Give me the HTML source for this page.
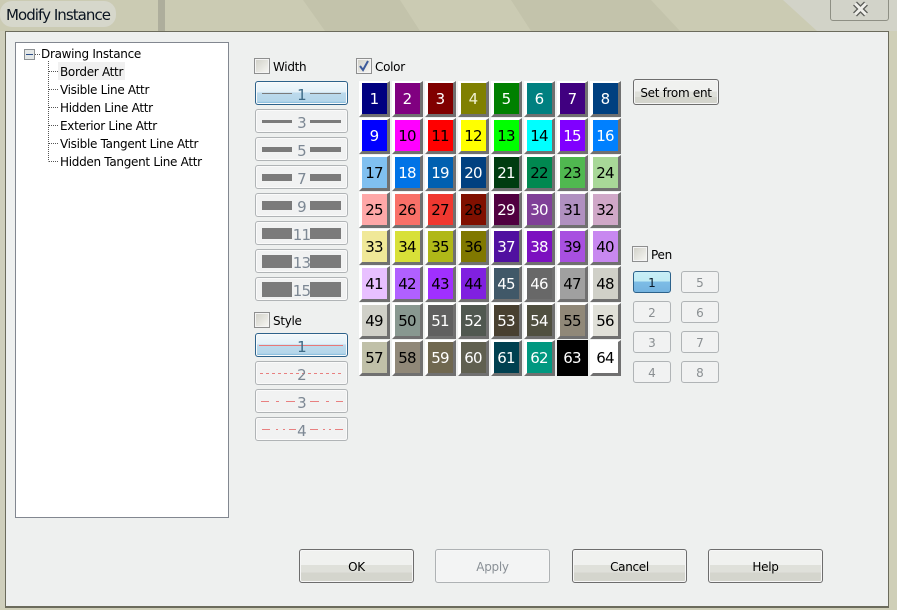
<!DOCTYPE html>
<html><head><meta charset="utf-8"><style>
html,body{margin:0;padding:0;width:897px;height:610px;overflow:hidden;background:#cbcbb3}
*{box-sizing:border-box}
body{position:relative;font-family:"DejaVu Sans","Liberation Sans",sans-serif;font-size:12px;letter-spacing:-.3px;color:#000}
.a{position:absolute;white-space:nowrap}
#dlg{position:absolute;left:5px;top:31px;width:884px;height:577px;background:#eef0ef;border:1px solid #6b6b5c;border-bottom:2px solid #6b6b5c}
#tree{position:absolute;left:15px;top:42px;width:214px;height:476px;background:#fff;border:1px solid #828790}
.t{position:absolute;left:60px;line-height:18px;height:18px;white-space:nowrap}
.cb{position:absolute;width:16px;height:16px;border:1px solid #8e8f8f;background:linear-gradient(135deg,#cfcfc6,#f8f8f5);box-shadow:inset 0 0 0 1px #f4f4f4}
.lb{position:absolute;line-height:16px;white-space:nowrap}
.w{position:absolute;left:255px;width:93px;height:24px;border:1px solid #b0b4b6;border-radius:3px;background:#f1f2f2;box-shadow:inset 0 0 0 1px #fafafa}
.w.on{border:1px solid #2c628b;background:linear-gradient(#f2f8fb 0,#e4f1f8 45%,#bcdaec 50%,#b5d6ea 88%,#5fa7d3 100%)}
.w i{position:absolute;background:#7b7b7b;display:block}
.w b,.p b{position:absolute;left:0;right:0;text-align:center;font:400 15px/24px "DejaVu Sans",sans-serif;letter-spacing:-.8px;color:#7d8894;top:1px}
.w.on b{color:#3d6a86}
.s{position:absolute;width:31px;height:36px;border-style:solid;border-width:2px 3px 3px 3px;border-color:#fff #707070 #707070 #fff}
.s span{position:absolute;left:0;top:0;width:25px;height:31px;padding-right:1px;text-align:center;font:400 15px/32px "DejaVu Sans",sans-serif;letter-spacing:-.8px}
.p{position:absolute;width:38px;height:22px;border:1px solid #b0b4b6;border-radius:3px;background:#f1f2f2}
.p b{font-size:12px;letter-spacing:0;line-height:20px;top:1px;color:#8a8f92}
.p.on{border:1px solid #2c628b;background:linear-gradient(#c9eff7 0,#c0ebf4 45%,#7dbde6 50%,#74b3df 100%)}
.p.on b{color:#0a1a2a}
.b{position:absolute;border:1px solid #6d6d6d;border-radius:3px;background:linear-gradient(#f0f1ef 0,#f0f1ef 47%,#dfe0da 47%,#dfe0da 70%,#d4d5cd 70%,#d4d5cd 100%);box-shadow:inset 0 0 0 1px #f6f6f6;text-align:center}
.b.d{border-color:#aeb2b4;background:#f3f4f4;color:#8a9096}
</style></head><body>
<svg class="a" style="left:0;top:0" width="897" height="34">
<polygon points="303,0 400,0 420,31 325,31" fill="#c3c3ab"/>
<polygon points="511,0 651,0 680,31 531,31" fill="#c3c3ab"/>
<polygon points="783,0 897,0 897,31 817,31" fill="#d2d3c8"/>
<rect x="158" y="0" width="7" height="31" fill="#aeae9c"/>
</svg>
<svg class="a" style="left:0;top:31px" width="897" height="579">
<rect x="889" y="0" width="8" height="579" fill="#cfcfb8"/>
<rect x="0" y="0" width="5" height="579" fill="#cfcfbc"/>
<rect x="0" y="577" width="897" height="2" fill="#cfcfb8"/>
</svg>
<div class="a" style="left:0;top:1px;width:116px;height:26px;background:#d6d7cb;border-radius:12px"></div>
<div class="a" style="left:6px;top:6px;font:400 15px/18px 'DejaVu Sans',sans-serif;letter-spacing:-.95px;color:#0a1420">Modify Instance</div>
<div class="a" style="left:830px;top:-4px;width:59px;height:25px;border:1px solid #8e8f84;border-radius:3px;background:#d2d3c9"></div>
<svg class="a" style="left:851px;top:1px" width="20" height="17" fill="none">
<path d="M4 2.5L15 13.5M15 2.5L4 13.5" stroke="#5c5d58" stroke-width="5.5"/>
<path d="M4 2.5L15 13.5M15 2.5L4 13.5" stroke="#efefea" stroke-width="3"/>
</svg>
<div id="dlg"></div>
<div id="tree"></div>
<svg class="a" style="left:15px;top:42px" width="60" height="130" fill="none">
<rect x="9.5" y="7.5" width="10" height="10" fill="#e4e7e6" stroke="#8d9194"/>
<path d="M11 12.5H18" stroke="#2c4f8a"/>
<path d="M20 12.5H25M33.5 19V119.5M34 29.5H44M34 47.5H44M34 65.5H44M34 83.5H44M34 101.5H44M34 119.5H44" stroke="#555" stroke-dasharray="1 1"/>
</svg>
<div class="t" style="left:41px;top:45px">Drawing Instance</div>
<div class="a" style="left:58px;top:62px;width:67px;height:18px;background:#f0f0f0"></div>
<div class="t" style="top:63px">Border Attr</div>
<div class="t" style="top:81px">Visible Line Attr</div>
<div class="t" style="top:99px">Hidden Line Attr</div>
<div class="t" style="top:117px">Exterior Line Attr</div>
<div class="t" style="top:135px">Visible Tangent Line Attr</div>
<div class="t" style="top:153px">Hidden Tangent Line Attr</div>

<div class="cb" style="left:254px;top:58px"></div><div class="lb" style="left:273px;top:59px">Width</div>
<div class="cb" style="left:356px;top:58px"></div>
<svg class="a" style="left:357px;top:59px" width="14" height="14"><path d="M3 7L6 11L11 2" fill="none" stroke="#3c5a9a" stroke-width="2"/></svg>
<div class="lb" style="left:375px;top:59px">Color</div>
<div class="cb" style="left:254px;top:312px"></div><div class="lb" style="left:273px;top:313px">Style</div>
<div class="cb" style="left:632px;top:246px"></div><div class="lb" style="left:651px;top:247px">Pen</div>

<div class="w on" style="top:81px"><i style="left:6px;top:11px;width:30px;height:1px"></i><i style="left:54px;top:11px;width:31px;height:1px"></i><b>1</b></div>
<div class="w" style="top:109px"><i style="left:6px;top:10px;width:30px;height:3px"></i><i style="left:54px;top:10px;width:31px;height:3px"></i><b>3</b></div>
<div class="w" style="top:137px"><i style="left:6px;top:9px;width:30px;height:5px"></i><i style="left:54px;top:9px;width:31px;height:5px"></i><b>5</b></div>
<div class="w" style="top:165px"><i style="left:6px;top:8px;width:30px;height:7px"></i><i style="left:54px;top:8px;width:31px;height:7px"></i><b>7</b></div>
<div class="w" style="top:193px"><i style="left:6px;top:7px;width:30px;height:9px"></i><i style="left:54px;top:7px;width:31px;height:9px"></i><b>9</b></div>
<div class="w" style="top:221px"><i style="left:6px;top:6px;width:30px;height:11px"></i><i style="left:54px;top:6px;width:31px;height:11px"></i><b>11</b></div>
<div class="w" style="top:249px"><i style="left:6px;top:5px;width:30px;height:13px"></i><i style="left:54px;top:5px;width:31px;height:13px"></i><b>13</b></div>
<div class="w" style="top:277px"><i style="left:6px;top:4px;width:30px;height:15px"></i><i style="left:54px;top:4px;width:31px;height:15px"></i><b>15</b></div>

<div class="w on" style="top:333px"><svg class="a" style="left:0;top:0" width="91" height="22"><path d="M3 11.5H87" stroke="#e87878"/></svg><b>1</b></div>
<div class="w" style="top:361px"><svg class="a" style="left:0;top:0" width="91" height="22"><path d="M4 11.5H87" stroke="#e88080" stroke-dasharray="3 3"/></svg><b>2</b></div>
<div class="w" style="top:389px"><svg class="a" style="left:0;top:0" width="91" height="22"><path d="M5 11.5H13M20 11.5H23M30 11.5H39M54 11.5H63M70 11.5H73M80 11.5H87" stroke="#e88080"/></svg><b>3</b></div>
<div class="w" style="top:417px"><svg class="a" style="left:0;top:0" width="91" height="22"><path d="M6 11.5H14M20 11.5H22M27 11.5H29M33 11.5H40M54 11.5H62M67 11.5H69M73 11.5H75M79 11.5H87" stroke="#e88080"/></svg><b>4</b></div>

<div class="s" style="left:359px;top:81px"><span style="background:#000080;color:#fff">1</span></div>
<div class="s" style="left:392px;top:81px"><span style="background:#800080;color:#fff">2</span></div>
<div class="s" style="left:425px;top:81px"><span style="background:#800000;color:#fff">3</span></div>
<div class="s" style="left:458px;top:81px"><span style="background:#808000;color:#f0f0d0">4</span></div>
<div class="s" style="left:491px;top:81px"><span style="background:#008000;color:#fff">5</span></div>
<div class="s" style="left:524px;top:81px"><span style="background:#008080;color:#fff">6</span></div>
<div class="s" style="left:557px;top:81px"><span style="background:#400080;color:#fff">7</span></div>
<div class="s" style="left:590px;top:81px"><span style="background:#004080;color:#fff">8</span></div>

<div class="s" style="left:359px;top:118px"><span style="background:#0000ff;color:#fff">9</span></div>
<div class="s" style="left:392px;top:118px"><span style="background:#ff00ff">10</span></div>
<div class="s" style="left:425px;top:118px"><span style="background:#ff0000">11</span></div>
<div class="s" style="left:458px;top:118px"><span style="background:#ffff00">12</span></div>
<div class="s" style="left:491px;top:118px"><span style="background:#00ff00">13</span></div>
<div class="s" style="left:524px;top:118px"><span style="background:#00ffff">14</span></div>
<div class="s" style="left:557px;top:118px"><span style="background:#8000ff;color:#fff">15</span></div>
<div class="s" style="left:590px;top:118px"><span style="background:#0080ff;color:#fff">16</span></div>

<div class="s" style="left:359px;top:155px"><span style="background:#80c0f0">17</span></div>
<div class="s" style="left:392px;top:155px"><span style="background:#0073e6;color:#fff">18</span></div>
<div class="s" style="left:425px;top:155px"><span style="background:#0060b0;color:#fff">19</span></div>
<div class="s" style="left:458px;top:155px"><span style="background:#004080;color:#fff">20</span></div>
<div class="s" style="left:491px;top:155px"><span style="background:#003c10;color:#fff">21</span></div>
<div class="s" style="left:524px;top:155px"><span style="background:#008850">22</span></div>
<div class="s" style="left:557px;top:155px"><span style="background:#50b850">23</span></div>
<div class="s" style="left:590px;top:155px"><span style="background:#a8d898">24</span></div>

<div class="s" style="left:359px;top:192px"><span style="background:#ffa8a8">25</span></div>
<div class="s" style="left:392px;top:192px"><span style="background:#f87068">26</span></div>
<div class="s" style="left:425px;top:192px"><span style="background:#f03830">27</span></div>
<div class="s" style="left:458px;top:192px"><span style="background:#801000">28</span></div>
<div class="s" style="left:491px;top:192px"><span style="background:#500040;color:#fff">29</span></div>
<div class="s" style="left:524px;top:192px"><span style="background:#804098;color:#fff">30</span></div>
<div class="s" style="left:557px;top:192px"><span style="background:#b090c0">31</span></div>
<div class="s" style="left:590px;top:192px"><span style="background:#d0a8c8">32</span></div>

<div class="s" style="left:359px;top:229px"><span style="background:#f0e898">33</span></div>
<div class="s" style="left:392px;top:229px"><span style="background:#d8e038">34</span></div>
<div class="s" style="left:425px;top:229px"><span style="background:#b0b818">35</span></div>
<div class="s" style="left:458px;top:229px"><span style="background:#807800">36</span></div>
<div class="s" style="left:491px;top:229px"><span style="background:#5010a0;color:#fff">37</span></div>
<div class="s" style="left:524px;top:229px"><span style="background:#7c10c0;color:#fff">38</span></div>
<div class="s" style="left:557px;top:229px"><span style="background:#a850e0">39</span></div>
<div class="s" style="left:590px;top:229px"><span style="background:#c888f0">40</span></div>

<div class="s" style="left:359px;top:266px"><span style="background:#e8c0ff">41</span></div>
<div class="s" style="left:392px;top:266px"><span style="background:#b060ff">42</span></div>
<div class="s" style="left:425px;top:266px"><span style="background:#a030ff">43</span></div>
<div class="s" style="left:458px;top:266px"><span style="background:#8020e0">44</span></div>
<div class="s" style="left:491px;top:266px"><span style="background:#405868;color:#fff">45</span></div>
<div class="s" style="left:524px;top:266px"><span style="background:#686868;color:#fff">46</span></div>
<div class="s" style="left:557px;top:266px"><span style="background:#a0a0a0">47</span></div>
<div class="s" style="left:590px;top:266px"><span style="background:#d0d0c8">48</span></div>

<div class="s" style="left:359px;top:303px"><span style="background:#d0d0c8">49</span></div>
<div class="s" style="left:392px;top:303px"><span style="background:#889890">50</span></div>
<div class="s" style="left:425px;top:303px"><span style="background:#606060;color:#fff">51</span></div>
<div class="s" style="left:458px;top:303px"><span style="background:#505850;color:#fff">52</span></div>
<div class="s" style="left:491px;top:303px"><span style="background:#484030;color:#fff">53</span></div>
<div class="s" style="left:524px;top:303px"><span style="background:#505040;color:#fff">54</span></div>
<div class="s" style="left:557px;top:303px"><span style="background:#908878">55</span></div>
<div class="s" style="left:590px;top:303px"><span style="background:#e0e0d8">56</span></div>

<div class="s" style="left:359px;top:340px"><span style="background:#c0c0a8">57</span></div>
<div class="s" style="left:392px;top:340px"><span style="background:#908878">58</span></div>
<div class="s" style="left:425px;top:340px"><span style="background:#706850;color:#fff">59</span></div>
<div class="s" style="left:458px;top:340px"><span style="background:#606050;color:#fff">60</span></div>
<div class="s" style="left:491px;top:340px"><span style="background:#004050;color:#fff">61</span></div>
<div class="s" style="left:524px;top:340px"><span style="background:#009880;color:#fff">62</span></div>
<div class="s" style="left:557px;top:340px;border-color:#000"><span style="background:#000;color:#fff">63</span></div>
<div class="s" style="left:590px;top:340px"><span style="background:#fff">64</span></div>

<div class="b" style="left:633px;top:79px;width:86px;height:26px;line-height:26px">Set from ent</div>

<div class="p on" style="left:633px;top:271px"><b>1</b></div>
<div class="p" style="left:633px;top:301px"><b>2</b></div>
<div class="p" style="left:633px;top:331px"><b>3</b></div>
<div class="p" style="left:633px;top:361px"><b>4</b></div>
<div class="p" style="left:681px;top:271px"><b>5</b></div>
<div class="p" style="left:681px;top:301px"><b>6</b></div>
<div class="p" style="left:681px;top:331px"><b>7</b></div>
<div class="p" style="left:681px;top:361px"><b>8</b></div>

<div class="b" style="left:299px;top:549px;width:115px;height:34px;line-height:34px">OK</div>
<div class="b d" style="left:435px;top:549px;width:115px;height:34px;line-height:34px">Apply</div>
<div class="b" style="left:572px;top:549px;width:115px;height:34px;line-height:34px">Cancel</div>
<div class="b" style="left:708px;top:549px;width:115px;height:34px;line-height:34px">Help</div>
</body></html>
